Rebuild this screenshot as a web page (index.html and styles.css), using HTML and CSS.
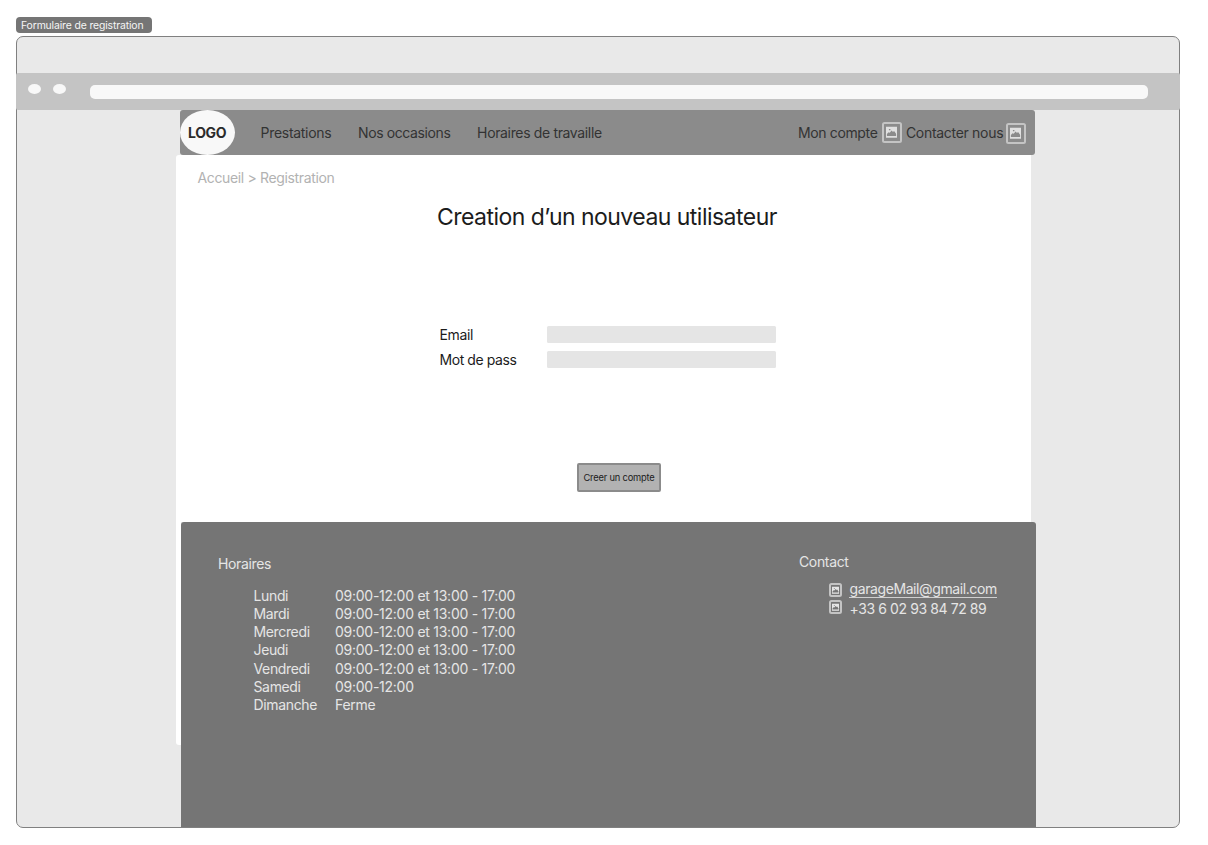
FILE: index.html
```html
<!DOCTYPE html>
<html lang="fr">
<head>
<meta charset="utf-8">
<title>Formulaire de registration</title>
<link rel="stylesheet" href="styles.css">
</head>
<body>
<svg class="defs" aria-hidden="true">
  <symbol id="picture" viewBox="0 0 12 12">
    <path fill="currentColor" fill-rule="evenodd" d="M0 0H12V12H0ZM1 10H11V7.6L8.8 4.6L7.6 5.6L6.2 4L4 6.6L2.8 6L1 8ZM3.2 2.4V3.8H4.8V2.4Z"/>
  </symbol>
</svg>
<div class="tag">Formulaire de registration</div>
<div class="frame">
  <div class="toolbar">
    <span class="dot"></span>
    <span class="dot"></span>
    <div class="address"></div>
  </div>
  <header class="header">
    <div class="logo">LOGO</div>
    <nav class="nav">
      <a class="nav-prestations">Prestations</a>
      <a class="nav-occasions">Nos occasions</a>
      <a class="nav-horaires">Horaires de travaille</a>
    </nav>
    <div class="actions">
      <a class="account">Mon compte</a>
      <span class="icon"><svg><use href="#picture"/></svg></span>
      <a class="contact-us">Contacter nous</a>
      <span class="icon icon-low"><svg><use href="#picture"/></svg></span>
    </div>
  </header>
  <main class="page">
    <div class="breadcrumb">Accueil &gt; Registration</div>
    <h1 class="title">Creation d’un nouveau utilisateur</h1>
    <form class="form">
      <label class="email">Email</label><div class="field"></div>
      <label class="password">Mot de pass</label><div class="field"></div>
    </form>
    <button class="submit">Creer un compte</button>
  </main>
  <div class="bottom">
    <div class="page-edge"></div>
    <footer class="footer">
      <section class="hours">
        <h2 class="heading">Horaires</h2>
        <dl class="schedule">
          <dt>Lundi</dt><dd>09:00-12:00 et 13:00 - 17:00</dd>
          <dt>Mardi</dt><dd>09:00-12:00 et 13:00 - 17:00</dd>
          <dt>Mercredi</dt><dd>09:00-12:00 et 13:00 - 17:00</dd>
          <dt>Jeudi</dt><dd>09:00-12:00 et 13:00 - 17:00</dd>
          <dt>Vendredi</dt><dd>09:00-12:00 et 13:00 - 17:00</dd>
          <dt>Samedi</dt><dd>09:00-12:00</dd>
          <dt>Dimanche</dt><dd>Ferme</dd>
        </dl>
      </section>
      <section class="contact">
        <h2 class="heading">Contact</h2>
        <div class="contact-list">
          <span class="icon-small"><svg><use href="#picture"/></svg></span><a class="mail">garageMail@gmail.com</a>
          <span class="icon-small icon-phone"><svg><use href="#picture"/></svg></span><span class="phone">+33 6 02 93 84 72 89</span>
        </div>
      </section>
    </footer>
  </div>
</div>
</body>
</html>
```
FILE: styles.css
```css
* { box-sizing: border-box; }
body {
  margin: 0;
  padding: 17px 0 0 16px;
  width: 1208px;
  height: 845px;
  overflow: hidden;
  background: #fff;
  font: 14px/18px Inter, sans-serif;
  letter-spacing: -0.35px;
  white-space: nowrap;
}
.defs { position: absolute; width: 0; height: 0; }
.tag {
  width: 136px;
  height: 16px;
  padding-left: 5px;
  border-radius: 4px;
  background: #757575;
  color: #f5f5f5;
  font-size: 10.4px;
  letter-spacing: -0.13px;
  line-height: 18px;
}
.frame {
  width: 1164px;
  height: 791.6px;
  margin-top: 3.4px;
  border: 1px solid #808080;
  border-radius: 7px;
  background: #e9e9e9;
}
.toolbar {
  display: flex;
  align-items: flex-start;
  height: 37.4px;
  margin: 35.2px -1px 0;
  padding: 11.4px 0 0 12px;
  border-radius: 2px;
  background: #c4c4c4;
}
.dot {
  width: 13px;
  height: 10px;
  margin-right: 12px;
  border-radius: 50%;
  background: #f8f8f8;
}
.address {
  width: 1058px;
  height: 14px;
  margin: 0.6px 0 0 12px;
  border-radius: 5px;
  background: #f8f8f8;
}
.header {
  display: flex;
  align-items: center;
  width: 855.3px;
  height: 45px;
  margin-left: 162.6px;
  border-radius: 3px;
  background: #8b8b8b;
  color: #333;
}
.logo {
  width: 55px;
  height: 45px;
  border-radius: 50%;
  background: #f8f8f8;
  color: #2b2b2b;
  font-weight: 700;
  line-height: 46px;
  text-align: center;
}
.nav { display: flex; margin-left: 26px; }
.nav-prestations { width: 97.5px; padding-top: 1px; letter-spacing: -0.3px; }
.nav-occasions { width: 119px; padding-top: 1px; letter-spacing: -0.4px; }
.nav-horaires { padding-top: 0.7px; }
.actions { display: flex; align-items: center; margin-left: auto; padding-right: 9px; }
.account { width: 84px; padding-top: 1px; }
.contact-us { width: 100px; margin-left: 4px; padding-top: 1px; letter-spacing: -0.3px; }
.icon {
  display: flex;
  width: 20px;
  height: 21.5px;
  padding: 2.5px;
  border: 2px solid #c4c4c4;
  border-radius: 2.5px;
  color: #e0e0e0;
}
.icon-low { margin-top: 2px; }
.icon svg, .icon-small svg { width: 100%; height: 100%; }
.page {
  display: flex;
  flex-direction: column;
  width: 855px;
  height: 367px;
  margin-left: 159.2px;
  padding: 14px 0 0 21.3px;
  border-radius: 3px 0 0 0;
  background: #fff;
  color: #1c1c1c;
}
.breadcrumb { color: #b2b2b2; }
.title {
  margin: 15.3px 0 0 239.5px;
  font-size: 23px;
  font-weight: 400;
  letter-spacing: -0.53px;
  line-height: 30px;
}
.form {
  display: grid;
  grid-template-columns: 107.2px 229.5px;
  grid-auto-rows: 17px;
  row-gap: 8px;
  margin: 93.4px 0 0 242px;
}
.password { letter-spacing: -0.42px; }
.field { border-radius: 1.5px; background: #e5e5e5; }
.submit {
  width: 84px;
  height: 29px;
  margin: 95px 0 0 379.5px;
  padding: 0;
  border: 2px solid #8b8b8b;
  border-radius: 2px;
  background: #b2b2b2;
  color: #1c1c1c;
  font: 9.3px/25px Inter, sans-serif;
  letter-spacing: -0.18px;
}
.bottom { display: flex; height: 305px; margin-left: 159.2px; }
.page-edge {
  width: 4.8px;
  height: 223px;
  border-radius: 0 0 0 3px;
  background: #fff;
}
.footer {
  display: flex;
  width: 855.4px;
  height: 305px;
  border-radius: 3px 3px 0 0;
  background: #757575;
  color: #e5e5e5;
}
.hours { width: 580.5px; padding: 33px 0 0 37px; }
.contact { padding-top: 31.2px; padding-left: 37.5px; }
.heading { margin: 0; font-size: 14px; font-weight: 400; }
.schedule {
  display: grid;
  grid-template-columns: 81.5px auto;
  grid-auto-rows: 18.15px;
  margin: 14px 0 0 35.5px;
}
.schedule dd { margin: 0; letter-spacing: -0.26px; }
.contact-list {
  display: grid;
  grid-template-columns: 13px auto;
  column-gap: 7.5px;
  row-gap: 1px;
  margin: 8.5px 0 0 30px;
  align-items: start;
}
.icon-small {
  display: flex;
  width: 13px;
  height: 14.5px;
  margin-top: 3px;
  padding: 1px;
  border: 2px solid #c4c4c4;
  border-radius: 2.5px;
}
.icon-phone { margin-top: 1px; }
.mail { height: 18px; border-bottom: 1px solid #d0d0d0; letter-spacing: -0.4px; }
.phone { margin-top: 1px; letter-spacing: -0.4px; }
```
